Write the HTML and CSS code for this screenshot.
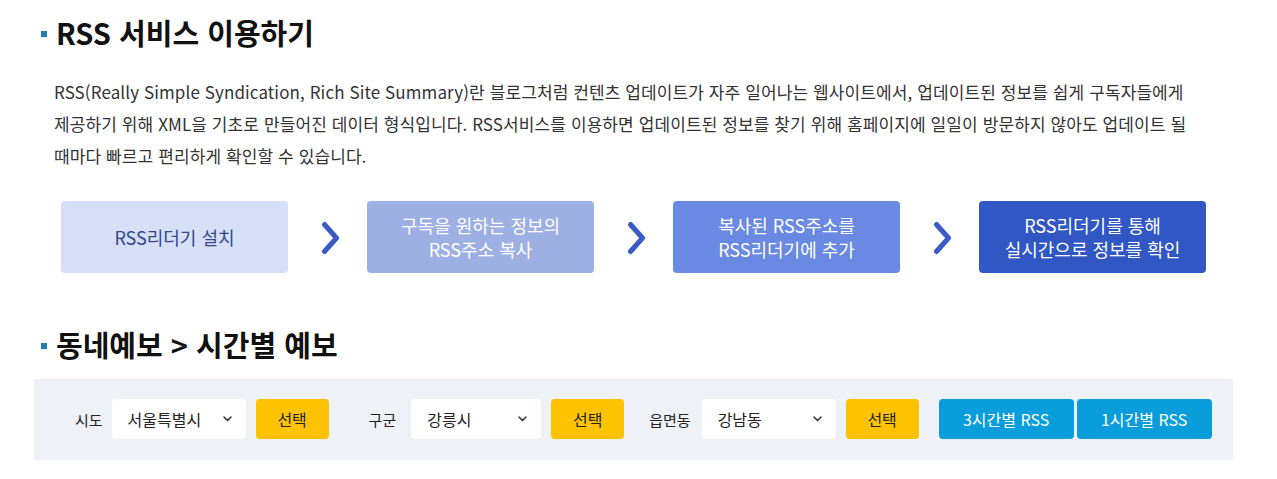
FILE: index.html
```html
<!DOCTYPE html>
<html lang="ko">
<head>
<meta charset="utf-8">
<title>RSS 서비스 이용하기</title>
<link rel="stylesheet" href="styles.css">
</head>
<body>
<div class="page">
  <h2 class="sec-title">RSS 서비스 이용하기</h2>
  <p class="desc">RSS(Really Simple Syndication, Rich Site Summary)란 블로그처럼 컨텐츠 업데이트가 자주 일어나는 웹사이트에서, 업데이트된 정보를 쉽게 구독자들에게<br>제공하기 위해 XML을 기초로 만들어진 데이터 형식입니다. RSS서비스를 이용하면 업데이트된 정보를 찾기 위해 홈페이지에 일일이 방문하지 않아도 업데이트 될<br>때마다 빠르고 편리하게 확인할 수 있습니다.</p>

  <ol class="steps">
    <li class="step step-1">RSS리더기 설치</li>
    <li class="arrow"><svg width="20" height="34" viewBox="0 0 20 34"><path d="M3.5 3.5 L15.5 17 L3.5 30.5" fill="none" stroke="#3a5bc7" stroke-width="5" stroke-linecap="round" stroke-linejoin="round"/></svg></li>
    <li class="step step-2">구독을 원하는 정보의<br>RSS주소 복사</li>
    <li class="arrow"><svg width="20" height="34" viewBox="0 0 20 34"><path d="M3.5 3.5 L15.5 17 L3.5 30.5" fill="none" stroke="#3a5bc7" stroke-width="5" stroke-linecap="round" stroke-linejoin="round"/></svg></li>
    <li class="step step-3">복사된 RSS주소를<br>RSS리더기에 추가</li>
    <li class="arrow"><svg width="20" height="34" viewBox="0 0 20 34"><path d="M3.5 3.5 L15.5 17 L3.5 30.5" fill="none" stroke="#3a5bc7" stroke-width="5" stroke-linecap="round" stroke-linejoin="round"/></svg></li>
    <li class="step step-4">RSS리더기를 통해<br>실시간으로 정보를 확인</li>
  </ol>

  <h2 class="sec-title sec-title-2">동네예보 &gt; 시간별 예보</h2>

  <div class="filter">
    <span class="label">시도</span>
    <div class="select sel-a"><span>서울특별시</span><svg class="chev" width="9" height="6" viewBox="0 0 9 6"><path d="M1 1 L4.5 4.6 L8 1" fill="none" stroke="#333" stroke-width="1.5" stroke-linecap="round" stroke-linejoin="round"/></svg></div>
    <button class="btn-yellow">선택</button>

    <span class="label label-gap">구군</span>
    <div class="select sel-b"><span>강릉시</span><svg class="chev" width="9" height="6" viewBox="0 0 9 6"><path d="M1 1 L4.5 4.6 L8 1" fill="none" stroke="#333" stroke-width="1.5" stroke-linecap="round" stroke-linejoin="round"/></svg></div>
    <button class="btn-yellow">선택</button>

    <span class="label label-gap-2">읍면동</span>
    <div class="select sel-a"><span>강남동</span><svg class="chev" width="9" height="6" viewBox="0 0 9 6"><path d="M1 1 L4.5 4.6 L8 1" fill="none" stroke="#333" stroke-width="1.5" stroke-linecap="round" stroke-linejoin="round"/></svg></div>
    <button class="btn-yellow">선택</button>

    <div class="rss-btns">
      <button class="btn-blue">3시간별 RSS</button>
      <button class="btn-blue">1시간별 RSS</button>
    </div>
  </div>
</div>
</body>
</html>
```

FILE: styles.css
```css
* { box-sizing: border-box; }
body {
  margin: 0;
  background: #fff;
  font-family: "Noto Sans CJK KR", "Noto Sans", sans-serif;
  color: #333;
}
.page {
  padding: 12px 44px 0 34px;
}
.sec-title {
  margin: 0 0 0 7px;
  display: flex;
  align-items: center;
  height: 40px;
  font-size: 29px;
  font-weight: 700;
  color: #111;
}
.sec-title::before {
  content: "";
  flex: none;
  width: 6px;
  height: 6px;
  background: #1f7fb5;
  margin-right: 9px;
  margin-top: 4px;
}
.sec-title-2 { margin-top: 51px; }
.desc {
  margin: 24px 0 0 20px;
  font-size: 17px;
  line-height: 32px;
  color: #333;
  letter-spacing: 0.1px;
  white-space: nowrap;
}
.steps {
  list-style: none;
  margin: 29px 0 0 27px;
  padding: 0;
  display: flex;
  align-items: center;
}
.step {
  width: 227px;
  height: 72px;
  border-radius: 4px;
  display: flex;
  align-items: center;
  justify-content: center;
  text-align: center;
  font-size: 18px;
  line-height: 24px;
  color: #fff;
}
.step-1 { background: #d6dff6; color: #34488a; }
.step-2 { background: #9eb0e3; }
.step-3 { background: #6989e2; }
.step-4 { background: #3157c5; }
.arrow {
  width: 79px;
  display: flex;
  justify-content: center;
  padding: 2px 0 0 7px;
}
.filter {
  margin-top: 15px;
  width: 1199px;
  height: 81px;
  background: #eef1f5;
  display: flex;
  align-items: center;
  padding: 0 0 1px 41px;
}
.label {
  font-size: 15px;
  color: #222;
  margin-right: 9px;
}
.label-gap { margin-left: 40px; margin-right: 15px; }
.label-gap-2 { margin-left: 25px; margin-right: 11px; }
.select {
  height: 40px;
  background: #fff;
  border-radius: 4px;
  display: flex;
  align-items: center;
  justify-content: space-between;
  padding: 0 14px 0 16px;
  font-size: 16px;
  color: #222;
}
.sel-a { width: 134px; }
.sel-b { width: 130px; }
.chev { flex: none; }
button {
  font-family: inherit;
  border: 0;
  cursor: pointer;
}
.btn-yellow {
  margin-left: 10px;
  width: 73px;
  height: 40px;
  border-radius: 4px;
  background: #fdc300;
  color: #222;
  font-size: 16px;
}
.rss-btns {
  margin-left: 20px;
  display: flex;
  gap: 3px;
}
.btn-blue {
  width: 135px;
  height: 40px;
  border-radius: 4px;
  background: #0a9ddb;
  color: #fff;
  font-size: 16px;
}
```
